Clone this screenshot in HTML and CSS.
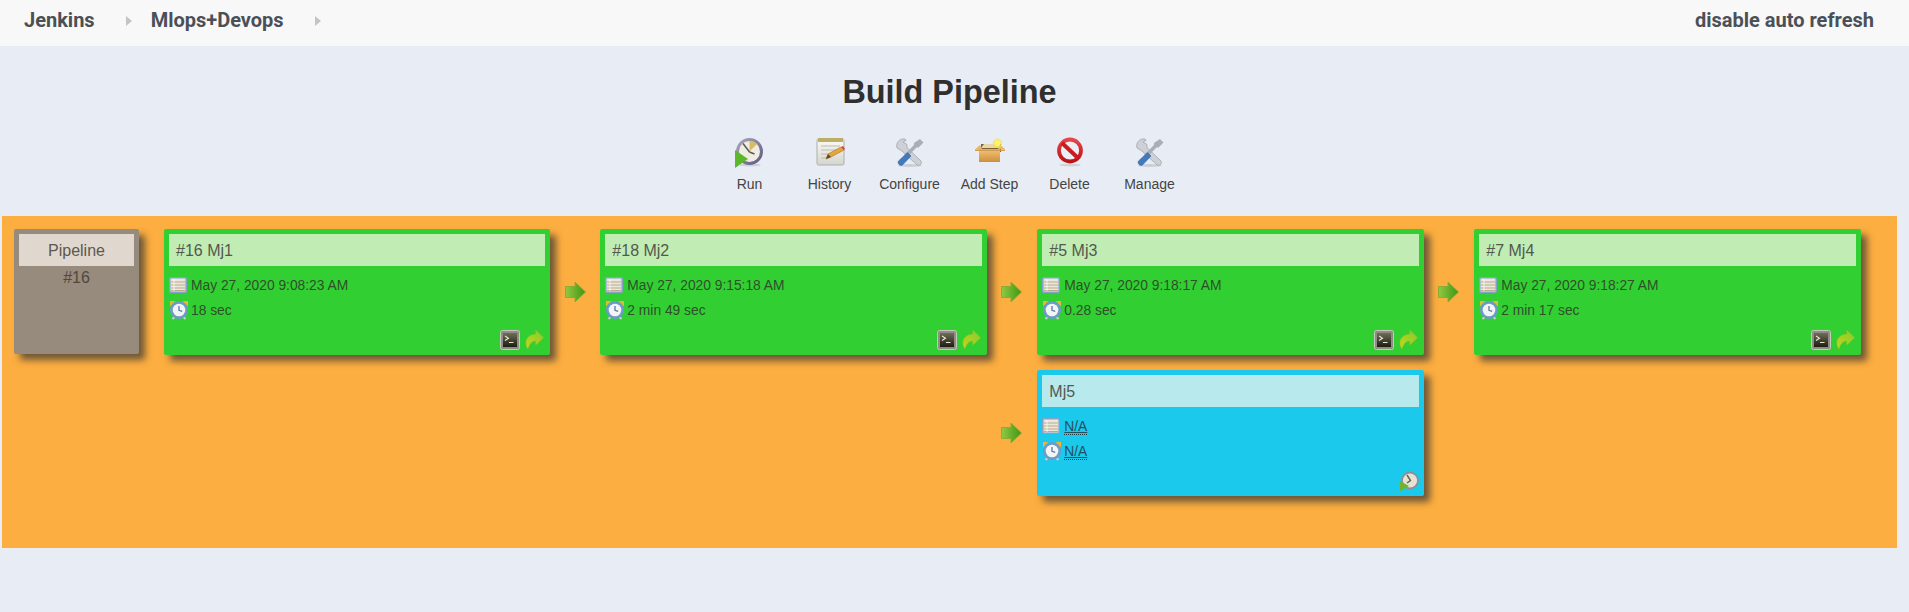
FILE: index.html
```html
<!DOCTYPE html>
<html lang="en">
<head>
<meta charset="utf-8">
<title>Build Pipeline</title>
<link rel="stylesheet" href="styles.css">
</head>
<body>
<svg class="defs" width="0" height="0" aria-hidden="true">
  <defs>
    <linearGradient id="gArrow" x1="0" y1="0" x2="1" y2="0"><stop offset="0" stop-color="#93c944"/><stop offset=".55" stop-color="#63ac26"/><stop offset="1" stop-color="#3f951a"/></linearGradient>
    <linearGradient id="gShare" x1="0" y1="1" x2="1" y2="0"><stop offset="0" stop-color="#c2d61c"/><stop offset="1" stop-color="#84cc2c"/></linearGradient>
    <linearGradient id="gBox" x1="0" y1="0" x2="0" y2="1"><stop offset="0" stop-color="#f2c577"/><stop offset="1" stop-color="#cf8f3d"/></linearGradient>
    <linearGradient id="gConsole" x1="0" y1="0" x2="0" y2="1"><stop offset="0" stop-color="#6e6e56"/><stop offset="1" stop-color="#1c1c12"/></linearGradient>
    <linearGradient id="gPaper" x1="0" y1="0" x2="0" y2="1"><stop offset="0" stop-color="#fbfaf4"/><stop offset="1" stop-color="#d5d5d0"/></linearGradient>
    <linearGradient id="gRing" x1="0" y1="0" x2="1" y2="1"><stop offset="0" stop-color="#a9a7b8"/><stop offset="1" stop-color="#5f5a86"/></linearGradient>
    <linearGradient id="gRed" x1="0" y1="0" x2="0" y2="1"><stop offset="0" stop-color="#e4474a"/><stop offset="1" stop-color="#bb1216"/></linearGradient>

    <symbol id="i-run" viewBox="0 0 32 32">
      <ellipse cx="16" cy="29" rx="11" ry="1.500" fill="#cdd0d6"/>
      <circle cx="15.500" cy="15.500" r="12" fill="#efece2" stroke="url(#gRing)" stroke-width="3"/>
      <path d="M15.500 15.500V5a10.500 10.500 0 0 1 7.500 3z" fill="#d9bb63"/>
      <path d="M15.500 16L9 7.500M15.500 16l5 2" stroke="#5a5a5a" stroke-width="1.500" fill="none"/>
      <path d="M1 14l13 9-13 9z" fill="#5cb82a"/>
    </symbol>
    <symbol id="i-history" viewBox="0 0 32 32">
      <rect x="3" y="3" width="27" height="26" rx="1.500" fill="url(#gPaper)" stroke="#aeaea8"/>
      <rect x="4" y="2" width="25" height="4" fill="#bcae66"/>
      <path d="M7 10h19M7 14h19M7 18h9M7 22h7" stroke="#bcbcb4" stroke-width="1.200"/>
      <path d="M12 23l2-5 13-7 3 3-13 7z" fill="#e5a63a" stroke="#a8752a" stroke-width=".6"/>
      <path d="M27 11l2-1 2 3-1 1z" fill="#d9423a"/>
      <path d="M12 23l2-5 3 3z" fill="#5e4a2a"/>
    </symbol>
    <symbol id="i-tools" viewBox="0 0 32 32">
      <ellipse cx="16" cy="29.500" rx="12" ry="1.500" fill="#cbcfd4"/>
      <path d="M11 3a7 7 0 0 0-8 9l5 3 15 14c2.500 1.500 5.500-1.500 4-4L13 11.500l0-3-4-2.500 3-1.500z" fill="#cdd0d4" stroke="#9a9da2" stroke-width=".7"/>
      <path d="M26 3l3.500 3.500-5 5-2 0-10 10-2.500-2.500 10-10 0-2z" fill="#a9afb7"/>
      <path d="M13.500 16.500l3.500 3.500-8.500 9c-2.500 1.500-5.500-1.500-4-4z" fill="#4379bd" stroke="#3a659f" stroke-width=".6"/>
    </symbol>
    <symbol id="i-box" viewBox="0 0 32 32">
      <path d="M7 8h20v8H7z" fill="#7a6038"/>
      <path d="M10 8h14l3 4H7z" fill="#e9d6ac"/>
      <path d="M5 13h21v13H5z" fill="url(#gBox)"/>
      <path d="M1 13.500L6 9l2 4z M31 13l-5-4-2 4z" fill="#e8b568"/>
      <path d="M1 13.500h30v1.500H1z" fill="#d29a4c"/>
      <circle cx="23.500" cy="7.300" r="4.800" fill="#f7e234" opacity=".6"/>
      <circle cx="23.500" cy="7.300" r="3" fill="#fff36a"/>
    </symbol>
    <symbol id="i-delete" viewBox="0 0 32 32">
      <ellipse cx="16" cy="29" rx="11" ry="1.500" fill="#cfd2d6"/>
      <circle cx="16" cy="14.500" r="11" fill="#ebeef3" stroke="url(#gRed)" stroke-width="3.800"/>
      <path d="M8 7l16 15" stroke="#cd1c20" stroke-width="4"/>
    </symbol>
    <symbol id="i-table" viewBox="0 0 18 16">
      <rect x=".8" y=".8" width="16.400" height="14.400" rx="1" fill="#ebe8da" stroke="#85a1cd" stroke-width="1.600"/>
      <path d="M2 5h14M2 8h14M2 11h14M2 13.500h14" stroke="#b9a98f" stroke-width="1.200"/>
      <path d="M5 2v12" stroke="#fff" stroke-width=".7"/>
    </symbol>
    <symbol id="i-clock" viewBox="0 0 20 20">
      <path d="M1 1h5.500L1 6.500z M19 1h-5.500L19 6.500z" fill="#e8b53a"/>
      <path d="M3.500 19l2.500-2.500M16.500 19L14 16.500" stroke="#c8ccd0" stroke-width="2.200"/>
      <circle cx="10" cy="10" r="9" fill="#6d9acb"/>
      <circle cx="10" cy="10" r="6.300" fill="#f3f5f4"/>
      <path d="M10 6v4.300l3.200 1" stroke="#5a7799" stroke-width="1.300" fill="none"/>
    </symbol>
    <symbol id="i-console" viewBox="0 0 20 20">
      <rect x=".5" y=".5" width="19" height="19" rx="2" fill="#8f8d85" stroke="#c8c6bf"/>
      <rect x="3" y="3" width="14" height="14" fill="url(#gConsole)"/>
      <path d="M5 6l3.500 2.200L5 10.500M9 12.500h4.500" stroke="#e9e9d6" stroke-width="1.100" fill="none"/>
    </symbol>
    <symbol id="i-share" viewBox="0 0 20 20">
      <path d="M10.700 0l8 7.700-8 7.600V11C7 11 4.500 14 3 19-1 14 0 5 10.700 4z" fill="url(#gShare)" stroke="#92b82a" stroke-width=".5"/>
    </symbol>
    <symbol id="i-arrow" viewBox="0 0 21 22">
      <path d="M.5 5.500h9.500V1l10.500 10L10 21v-4.500H.5z" fill="url(#gArrow)" stroke="#86ab34" stroke-width=".9"/>
    </symbol>
    <symbol id="i-runsmall" viewBox="0 0 20 20">
      <circle cx="11" cy="9.500" r="8" fill="#e6e3d6" stroke="#8f8f92" stroke-width="1.800"/>
      <path d="M8 4l3.500 5.500L8 12" stroke="#5f5f52" stroke-width="1.400" fill="none"/>
      <path d="M1 10l9 5-9 5z" fill="#6fb52c"/>
    </symbol>
  </defs>
</svg>

<nav class="topbar">
  <ul class="crumbs">
    <li class="crumb">Jenkins</li>
    <li class="sep"></li>
    <li class="crumb">Mlops+Devops</li>
    <li class="sep"></li>
  </ul>
  <a class="refresh">disable auto refresh</a>
</nav>

<main class="page">
  <h1 class="title">Build Pipeline</h1>
  <ul class="tools">
    <li class="tool"><svg class="tool-icon"><use href="#i-run"/></svg><span>Run</span></li>
    <li class="tool"><svg class="tool-icon"><use href="#i-history"/></svg><span>History</span></li>
    <li class="tool"><svg class="tool-icon"><use href="#i-tools"/></svg><span>Configure</span></li>
    <li class="tool"><svg class="tool-icon"><use href="#i-box"/></svg><span>Add Step</span></li>
    <li class="tool"><svg class="tool-icon"><use href="#i-delete"/></svg><span>Delete</span></li>
    <li class="tool"><svg class="tool-icon"><use href="#i-tools"/></svg><span>Manage</span></li>
  </ul>

  <section class="board">
    <div class="pipe-card">
      <div class="pipe-head">Pipeline</div>
      <div class="pipe-num">#16</div>
    </div>

    <article class="card ok c1">
      <div class="card-head">#16 Mj1</div>
      <div class="row"><svg class="ic-table"><use href="#i-table"/></svg>May 27, 2020 9:08:23 AM</div>
      <div class="row"><svg class="ic-clock"><use href="#i-clock"/></svg>18 sec</div>
      <div class="actions"><svg class="ic-act"><use href="#i-console"/></svg><svg class="ic-act"><use href="#i-share"/></svg></div>
    </article>

    <svg class="arrow a2"><use href="#i-arrow"/></svg>
    <article class="card ok c2">
      <div class="card-head">#18 Mj2</div>
      <div class="row"><svg class="ic-table"><use href="#i-table"/></svg>May 27, 2020 9:15:18 AM</div>
      <div class="row"><svg class="ic-clock"><use href="#i-clock"/></svg>2 min 49 sec</div>
      <div class="actions"><svg class="ic-act"><use href="#i-console"/></svg><svg class="ic-act"><use href="#i-share"/></svg></div>
    </article>

    <svg class="arrow a3"><use href="#i-arrow"/></svg>
    <article class="card ok c3">
      <div class="card-head">#5 Mj3</div>
      <div class="row"><svg class="ic-table"><use href="#i-table"/></svg>May 27, 2020 9:18:17 AM</div>
      <div class="row"><svg class="ic-clock"><use href="#i-clock"/></svg>0.28 sec</div>
      <div class="actions"><svg class="ic-act"><use href="#i-console"/></svg><svg class="ic-act"><use href="#i-share"/></svg></div>
    </article>

    <svg class="arrow a4"><use href="#i-arrow"/></svg>
    <article class="card ok c4">
      <div class="card-head">#7 Mj4</div>
      <div class="row"><svg class="ic-table"><use href="#i-table"/></svg>May 27, 2020 9:18:27 AM</div>
      <div class="row"><svg class="ic-clock"><use href="#i-clock"/></svg>2 min 17 sec</div>
      <div class="actions"><svg class="ic-act"><use href="#i-console"/></svg><svg class="ic-act"><use href="#i-share"/></svg></div>
    </article>

    <svg class="arrow a3 second"><use href="#i-arrow"/></svg>
    <article class="card pending c3 second">
      <div class="card-head">Mj5</div>
      <div class="row"><svg class="ic-table"><use href="#i-table"/></svg><a class="na">N/A</a></div>
      <div class="row"><svg class="ic-clock"><use href="#i-clock"/></svg><a class="na">N/A</a></div>
      <div class="actions"><svg class="ic-act"><use href="#i-runsmall"/></svg></div>
    </article>
  </section>
</main>
</body>
</html>
```

FILE: styles.css
```css
* { box-sizing: border-box; }

html, body { margin: 0; padding: 0; }

body {
  background: #e8edf5;
  font-family: "Liberation Sans", Arial, sans-serif;
  color: #333;
}

.defs { position: absolute; }

.topbar {
  height: 46px;
  background: #f8f8f8;
  display: flex;
  justify-content: space-between;
  align-items: flex-start;
  padding: 8px 35px 0 24px;
  font-family: Roboto, sans-serif;
  font-weight: 700;
  font-size: 20px;
  line-height: 25px;
  color: #4b5057;
}

.crumbs {
  list-style: none;
  margin: 0;
  padding: 0;
  display: flex;
  align-items: center;
}

.sep {
  width: 0;
  height: 0;
  margin: 0 19px 0 31px;
  border-left: 6px solid #c4c4c4;
  border-top: 5px solid transparent;
  border-bottom: 5px solid transparent;
}

.page { width: 1899px; }

.title {
  margin: 0;
  padding-top: 26px;
  text-align: center;
  font-size: 32.4px;
  line-height: 40px;
  font-weight: 700;
  color: #2f2f2f;
}

.tools {
  list-style: none;
  margin: 0;
  padding: 24px 0 0;
  height: 104px;
  display: flex;
  justify-content: center;
}

.tool {
  width: 80px;
  display: flex;
  flex-direction: column;
  align-items: center;
  font-size: 14px;
  line-height: 16px;
  color: #444;
}

.tool-icon {
  width: 32px;
  height: 32px;
  margin-bottom: 8px;
  filter: blur(.35px);
}

.board {
  margin: 0 2px;
  height: 332px;
  padding: 13px 0 0 12px;
  background: #fdae40;
  display: grid;
  grid-template-columns: 125px 25px 386.33px 50px 386.33px 50.67px 386.33px 50.67px 386.33px;
  grid-template-rows: 126px 126px;
  row-gap: 15px;
  align-items: start;
}

.pipe-card {
  grid-column: 1;
  grid-row: 1;
  height: 125px;
  padding: 5px;
  border-radius: 2px;
  background: #968b7d;
  box-shadow: 6px 6px 7px rgba(50, 50, 50, .7);
  text-align: center;
  font-size: 16px;
  color: #51483e;
}

.pipe-head {
  height: 32px;
  line-height: 34px;
  background: #e0d8ce;
  color: #5d5750;
}

.pipe-num { line-height: 24px; }

.card {
  grid-row: 1;
  height: 126px;
  padding: 5px;
  border-radius: 2px;
  display: flex;
  flex-direction: column;
  box-shadow: 6px 6px 7px rgba(50, 50, 50, .7);
  font-size: 13.8px;
  color: #2f4f2b;
}

.card.ok { background: #32cf32; }
.card.pending { background: #1bc9ec; color: #23505f; }
.second { grid-row: 2; }

.c1 { grid-column: 3; }
.c2 { grid-column: 5; }
.c3 { grid-column: 7; }
.c4 { grid-column: 9; }
.a2 { grid-column: 4; }
.a3 { grid-column: 6; }
.a4 { grid-column: 8; }

.card.second { grid-row: 2; }

.card-head {
  height: 32px;
  line-height: 34px;
  padding-left: 7px;
  font-size: 16px;
  margin-bottom: 7px;
  color: #54594e;
}

.ok .card-head { background: #c1ecb4; }
.pending .card-head { background: #b8e9ec; }

.row {
  height: 25px;
  display: flex;
  align-items: center;
  white-space: pre;
}

.ic-table { width: 18px; height: 16px; margin: 0 4px 2px 0; filter: blur(.25px); }
.ic-clock { width: 20px; height: 20px; margin: 0 2px 2px 0; filter: blur(.25px); }

.na {
  text-decoration: underline;
  border-bottom: 1px dotted #1b3b44;
  line-height: 15px;
}

.actions {
  margin-top: auto;
  display: flex;
  justify-content: flex-end;
  gap: 5px;
}

.ic-act { width: 20px; height: 20px; filter: blur(.25px); }

.arrow {
  width: 21px;
  height: 22px;
  align-self: center;
  justify-self: center;
  filter: blur(.3px);
}
```
